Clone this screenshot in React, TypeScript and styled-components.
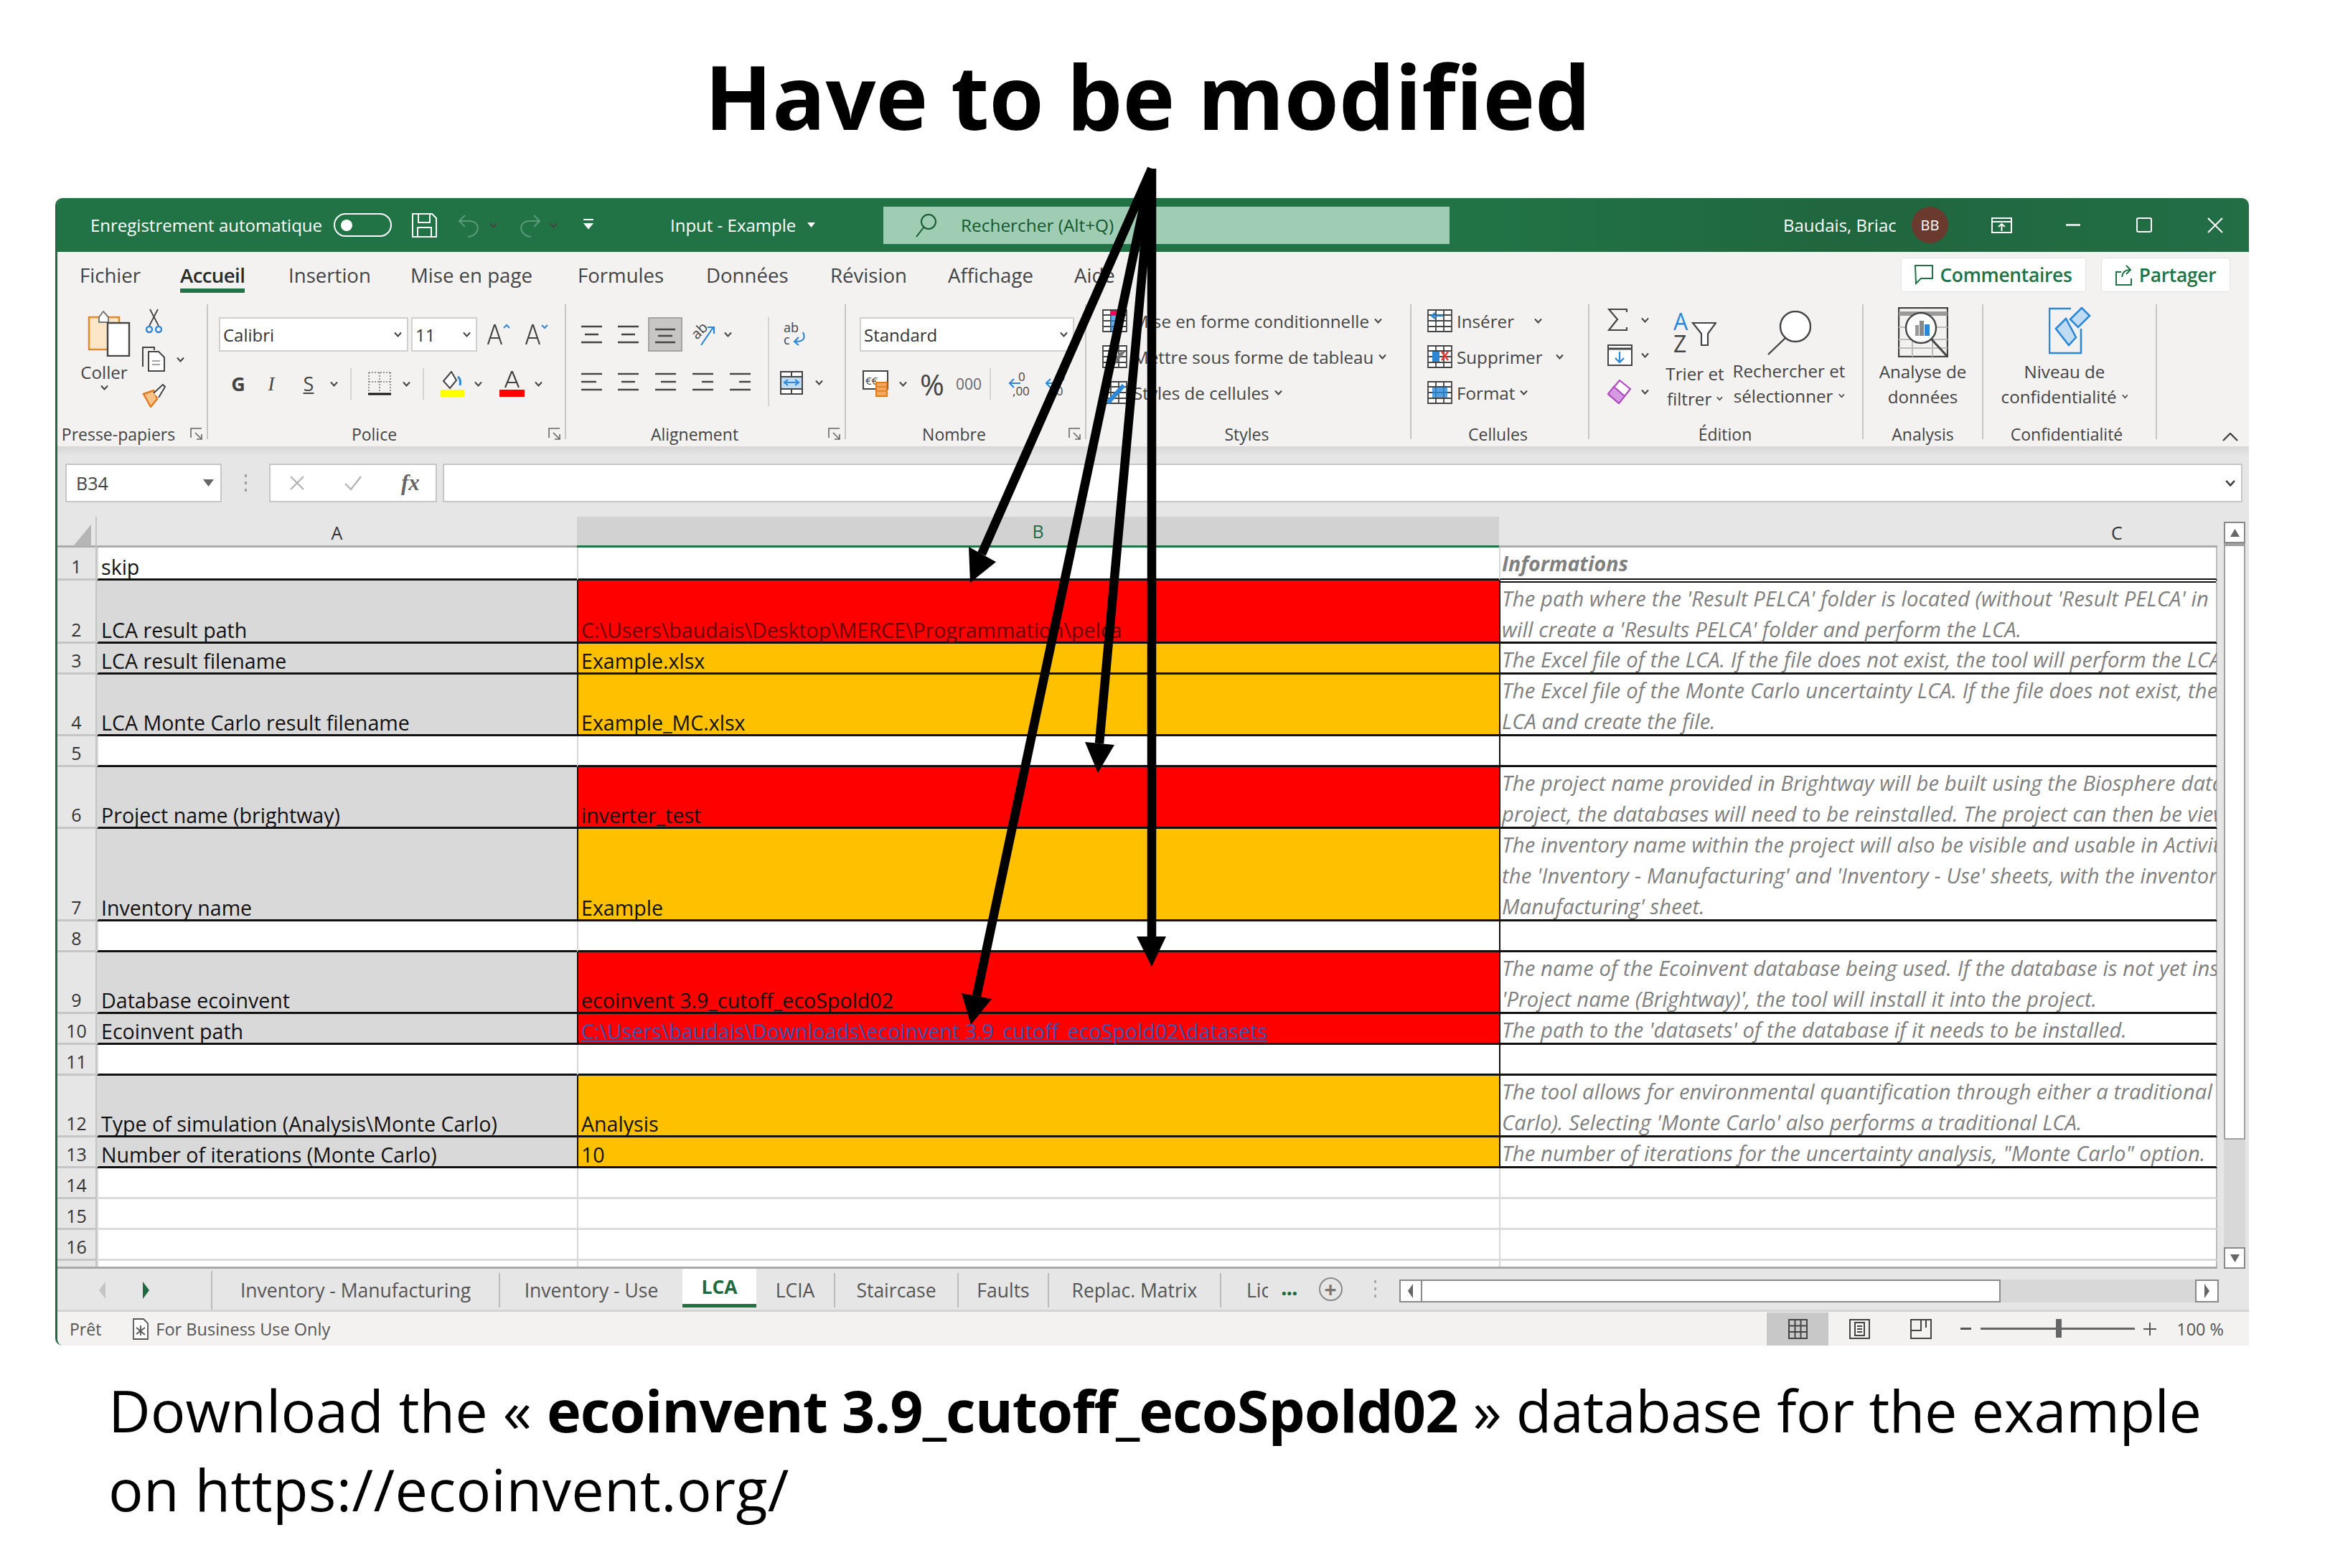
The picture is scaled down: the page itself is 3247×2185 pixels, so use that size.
import React from "react";
import styled, { createGlobalStyle } from "styled-components";

const Global = createGlobalStyle`
  html, body { margin: 0; padding: 0; background: #fff; }
  body { font-family: "Open Sans", "Liberation Sans", sans-serif; }
  * { box-sizing: border-box; }
`;

const Page = styled.div`
  position: relative;
  width: 3247px;
  height: 2185px;
  overflow: hidden;
  background: #fff;
`;

const Heading = styled.h1`
  height: 276px;
  margin: 0;
  padding: 0 48px 10px 0;
  display: flex;
  align-items: center;
  justify-content: center;
  font-size: 123px;
  font-weight: 700;
  color: #000;
`;

const Footer = styled.p`
  margin: 35px 0 0 151px;
  font-size: 81px;
  line-height: 110px;
  color: #000;
  white-space: nowrap;
  b {
    letter-spacing: -1px;
  }
`;

const Spaced = styled.span<{ $ls: number }>`
  letter-spacing: ${(p) => p.$ls}px;
`;

const Window = styled.div`
  width: 3057px;
  height: 1599px;
  margin-left: 77px;
  display: flex;
  flex-direction: column;
  background: #e6e6e6;
  border-left: 3px solid #1e6b41;
  border-radius: 10px 10px 0 10px;
  overflow: hidden;
`;

/* title bar */
const TitleBar = styled.div`
  flex: none;
  height: 75px;
  display: flex;
  align-items: center;
  padding-left: 46px;
  background: linear-gradient(90deg, #217346 0%, #217346 65%, #20663f 82%, #226e45 100%);
  color: #fff;
  font-size: 24px;
  white-space: nowrap;
`;

const Slot = styled.div<{ $w: number }>`
  flex: none;
  width: ${(p) => p.$w}px;
  display: flex;
  align-items: center;
`;

const Toggle = styled.div`
  width: 81px;
  height: 33px;
  border: 2px solid #fff;
  border-radius: 17px;
  display: flex;
  align-items: center;
  padding-left: 8px;
  &::before {
    content: "";
    width: 16px;
    height: 16px;
    border-radius: 50%;
    background: #fff;
  }
`;

const SearchBox = styled.div`
  flex: none;
  width: 789px;
  height: 52px;
  display: flex;
  align-items: center;
  gap: 34px;
  padding-left: 44px;
  background: #9fcdb3;
  color: #14592f;
  font-size: 24.4px;
`;

const Avatar = styled.div`
  width: 51px;
  height: 51px;
  border-radius: 50%;
  background: #6a3a2e;
  display: flex;
  align-items: center;
  justify-content: center;
  font-size: 20px;
`;

/* ribbon */
const Ribbon = styled.div`
  flex: none;
  height: 271px;
  display: flex;
  flex-direction: column;
  background: #f3f2f1;
  color: #444;
`;

const TabRow = styled.div`
  height: 73px;
  flex: none;
  display: flex;
  padding-left: 31px;
  font-size: 27.6px;
  white-space: nowrap;
`;

const RibbonTab = styled.div<{ $w: number; $active?: boolean }>`
  flex: none;
  width: ${(p) => p.$w}px;
  padding-top: 13px;
  span {
    display: inline-block;
    height: 44px;
    color: ${(p) => (p.$active ? "#2b2b2b" : "#444")};
    font-weight: ${(p) => (p.$active ? 600 : 400)};
    letter-spacing: ${(p) => (p.$active ? "-0.6px" : "0")};
    border-bottom: ${(p) => (p.$active ? "6px solid #217346" : "none")};
  }
`;

const TabActions = styled.div`
  margin-left: auto;
  display: flex;
  gap: 21px;
  padding: 8px 26px 0 0;
`;

const ActionButton = styled.div<{ $w: number }>`
  width: ${(p) => p.$w}px;
  height: 48px;
  display: flex;
  align-items: center;
  justify-content: center;
  gap: 9px;
  background: #fff;
  border: 1px solid #e4e3e2;
  border-radius: 3px;
  color: #217346;
  font-weight: 600;
  font-size: 26.4px;
  letter-spacing: -0.3px;
`;

const Groups = styled.div`
  flex: 1;
  display: flex;
  padding-left: 2px;
`;

const Group = styled.div<{ $w: number }>`
  position: relative;
  flex: none;
  width: ${(p) => p.$w}px;
  height: 198px;
  display: flex;
  flex-direction: column;
  &::after {
    content: "";
    position: absolute;
    top: 0;
    right: 0;
    width: 2px;
    height: 188px;
    background: #c8c6c4;
  }
`;

const GroupBody = styled.div`
  height: 164px;
  display: flex;
`;

const GroupLabel = styled.div<{ $pr?: number }>`
  height: 34px;
  line-height: 34px;
  text-align: center;
  padding-right: ${(p) => p.$pr ?? 0}px;
  font-size: 23px;
  color: #444;
  white-space: nowrap;
`;

const Launcher = styled.svg`
  position: absolute;
  right: 7px;
  bottom: 8px;
`;

const Stack = styled.div<{ $gap?: number; $top?: number; $left?: number; $w?: number; $center?: boolean }>`
  flex: none;
  display: flex;
  flex-direction: column;
  gap: ${(p) => p.$gap ?? 0}px;
  margin-top: ${(p) => p.$top ?? 0}px;
  margin-left: ${(p) => p.$left ?? 0}px;
  ${(p) => (p.$w ? `width: ${p.$w}px;` : "")}
  ${(p) => (p.$center ? "align-items: center;" : "")}
`;

const Line = styled.div<{ $gap?: number; $left?: number; $h?: number }>`
  display: flex;
  align-items: center;
  gap: ${(p) => p.$gap ?? 0}px;
  margin-left: ${(p) => p.$left ?? 0}px;
  ${(p) => (p.$h ? `height: ${p.$h}px;` : "")}
  white-space: nowrap;
`;

const Icon = styled.svg<{ $ml?: number }>`
  display: block;
  flex: none;
  margin-left: ${(p) => p.$ml ?? 0}px;
`;

const SmallText = styled.div<{ $ml?: number; $mt?: number }>`
  font-size: 24.2px;
  line-height: 35px;
  color: #444;
  white-space: nowrap;
  margin-left: ${(p) => p.$ml ?? 0}px;
  margin-top: ${(p) => p.$mt ?? 0}px;
  display: flex;
  align-items: center;
  gap: 7px;
`;

const StyleRow = styled.div<{ $gap: number }>`
  height: 34px;
  display: flex;
  align-items: center;
  gap: ${(p) => p.$gap}px;
  white-space: nowrap;
`;

const SelectBox = styled.div<{ $w: number; $ml?: number }>`
  flex: none;
  width: ${(p) => p.$w}px;
  height: 48px;
  margin-left: ${(p) => p.$ml ?? 0}px;
  background: #fff;
  border: 2px solid #d2d0ce;
  display: flex;
  align-items: center;
  justify-content: space-between;
  padding: 0 7px 0 4px;
  font-size: 24px;
  color: #333;
`;

const FontButton = styled.div<{ $w: number; $italic?: boolean; $under?: boolean; $bold?: boolean; $ml?: number }>`
  flex: none;
  width: ${(p) => p.$w}px;
  margin-left: ${(p) => p.$ml ?? 0}px;
  text-align: center;
  font-size: 27px;
  line-height: 34px;
  color: #444;
  font-family: ${(p) => (p.$italic ? '"Liberation Serif", serif' : "inherit")};
  font-style: ${(p) => (p.$italic ? "italic" : "normal")};
  font-weight: ${(p) => (p.$bold ? 700 : 400)};
  text-decoration: ${(p) => (p.$under ? "underline" : "none")};
`;

const VRule = styled.div<{ $h: number; $ml: number; $mt?: number; $mr?: number }>`
  flex: none;
  width: 2px;
  height: ${(p) => p.$h}px;
  margin-left: ${(p) => p.$ml}px;
  margin-top: ${(p) => p.$mt ?? 0}px;
  margin-right: ${(p) => p.$mr ?? 0}px;
  background: #d6d4d2;
`;

const ActiveAlign = styled.div`
  flex: none;
  width: 48px;
  height: 48px;
  margin-left: 12px;
  background: #c8c6c4;
  border: 2px solid #a5a3a1;
  display: flex;
  align-items: center;
  justify-content: center;
`;

const PercentSign = styled.div`
  flex: none;
  margin-left: 18px;
  font-size: 41px;
  color: #444;
  line-height: 44px;
`;

const Thousands = styled.div`
  flex: none;
  margin-left: 16px;
  font-size: 21px;
  color: #666;
`;

const Collapse = styled.svg`
  position: absolute;
  right: 15px;
  bottom: 7px;
`;

const RibbonWrap = styled.div`
  position: relative;
`;

/* formula bar */
const FormulaBar = styled.div`
  flex: none;
  height: 98px;
  padding: 24px 9px 0 11px;
  display: flex;
  align-items: flex-start;
  background: linear-gradient(180deg, #d8d8d8 0, #e6e6e6 14px);
`;

const NameBox = styled.div`
  flex: none;
  width: 218px;
  height: 54px;
  background: #fff;
  border: 2px solid #c6c6c6;
  display: flex;
  align-items: center;
  justify-content: space-between;
  padding: 0 9px 0 13px;
  font-size: 25px;
  color: #444;
`;

const Dots = styled.div`
  flex: none;
  width: 66px;
  height: 54px;
  display: flex;
  align-items: center;
  justify-content: center;
  &::before {
    content: "";
    width: 3px;
    height: 24px;
    background: repeating-linear-gradient(180deg, #a0a0a0 0 4px, transparent 4px 10px);
  }
`;

const FxBox = styled.div`
  flex: none;
  width: 234px;
  height: 54px;
  background: #fff;
  border: 2px solid #c6c6c6;
  display: flex;
  align-items: center;
  gap: 54px;
  padding-left: 26px;
  color: #555;
`;

const FxLabel = styled.span`
  font-family: "Liberation Serif", serif;
  font-style: italic;
  font-size: 31px;
  font-weight: 700;
  color: #666;
`;

const FormulaInput = styled.div`
  flex: 1;
  height: 54px;
  margin-left: 8px;
  background: #fff;
  border: 2px solid #c6c6c6;
  display: flex;
  align-items: center;
  justify-content: flex-end;
  padding-right: 8px;
`;

/* sheet */
const SheetArea = styled.div`
  flex: none;
  height: 1048px;
  display: flex;
  background: #fff;
`;

const Grid = styled.div`
  flex: none;
  width: 3010px;
  height: 1048px;
  overflow: hidden;
  border-bottom: 3px solid #a8a8a8;
`;

const ColHeads = styled.div`
  height: 43px;
  display: grid;
  grid-template-columns: 55px 669px 1285px 1001px;
  background: #e6e6e6;
  font-size: 25px;
  color: #333;
  border-bottom: 3px solid #ababab;
`;

const CornerCell = styled.div`
  border-right: 2px solid #c4c4c4;
  display: flex;
  align-items: flex-end;
  justify-content: flex-end;
  padding: 0 6px 2px 0;
`;

const ColHead = styled.div<{ $selected?: boolean; $pl?: number }>`
  display: flex;
  align-items: center;
  justify-content: ${(p) => (p.$pl ? "flex-start" : "center")};
  padding-left: ${(p) => p.$pl ?? 0}px;
  height: 43px;
  background: ${(p) => (p.$selected ? "#d2d2d2" : "transparent")};
  ${(p) => (p.$selected ? "color: #1e6b41; border-bottom: 3px solid #217346;" : "")}
`;

const SheetRow = styled.div<{ $h: number }>`
  height: ${(p) => p.$h}px;
  display: grid;
  grid-template-columns: 55px 669px 1285px 1001px;
  grid-template-rows: ${(p) => p.$h}px;
`;

const RowHead = styled.div`
  background: #e6e6e6;
  border-right: 2px solid #c4c4c4;
  border-bottom: 3px solid #c6c6c6;
  display: flex;
  align-items: flex-end;
  justify-content: center;
  font-size: 25px;
  line-height: 33px;
  color: #333;
`;

const Cell = styled.div<{ $fill?: string; $dark?: boolean; $leftDark?: boolean; $color?: string }>`
  background: ${(p) => p.$fill ?? "#fff"};
  border-bottom: 3px solid ${(p) => (p.$dark ? "#111" : "#dcdcdc")};
  border-left: 2px solid ${(p) => (p.$leftDark ? "#111" : "#d8d8d8")};
  padding: 0 0 0 4px;
  display: flex;
  flex-direction: column;
  justify-content: flex-end;
  font-size: 28.6px;
  line-height: 33px;
  color: ${(p) => p.$color ?? "#111"};
  white-space: nowrap;
`;

const NoteCell = styled(Cell)<{ $pt: number }>`
  position: relative;
  justify-content: flex-start;
  padding: ${(p) => p.$pt}px 0 0 2px;
  border-right: 2px solid #bcbcbc;
`;

const NoteLine = styled.div`
  width: 996px;
  height: 43px;
  flex: none;
  overflow: hidden;
  line-height: 43px;
  font-size: 29.2px;
  font-style: italic;
  color: #7f7f7f;
  letter-spacing: 0.13px;
`;

const NoteTitle = styled(NoteLine)`
  font-weight: 700;
  font-size: 28.5px;
  letter-spacing: 0;
`;

const DoubleRule = styled.div`
  position: absolute;
  left: 0;
  right: 0;
  bottom: -6px;
  height: 6px;
  border-top: 2px solid #111;
  border-bottom: 2px solid #111;
  background: #fff;
  z-index: 1;
`;

const LinkText = styled.span`
  color: #3357b5;
  text-decoration: underline;
`;

const VScroll = styled.div`
  flex: none;
  width: 44px;
  height: 1048px;
  background: #e6e6e6;
  padding: 7px 5px 0 9px;
  display: flex;
  flex-direction: column;
`;

const ScrollButton = styled.div`
  flex: none;
  height: 30px;
  background: #fff;
  border: 2px solid #8a8a8a;
  display: flex;
  align-items: center;
  justify-content: center;
`;

const ScrollThumb = styled.div`
  flex: none;
  height: 831px;
  background: #fff;
  border: 2px solid #a0a0a0;
  border-top-width: 4px;
`;

const ScrollTrack = styled.div`
  flex: 1;
  background: #d8d8d8;
`;

/* sheet tabs */
const TabBar = styled.div`
  flex: none;
  height: 60px;
  display: flex;
  align-items: flex-start;
  background: #e6e6e6;
  font-size: 26.5px;
  color: #555;
  white-space: nowrap;
  border-bottom: 3px solid #d4d4d4;
`;

const NavArrows = styled.div`
  flex: none;
  width: 216px;
  height: 54px;
  display: flex;
  align-items: center;
  padding-left: 58px;
  gap: 52px;
  border-right: 2px solid #bcbcbc;
  margin-top: 3px;
`;

const SheetTab = styled.div<{ $w: number; $active?: boolean; $last?: boolean }>`
  flex: none;
  width: ${(p) => p.$w}px;
  height: ${(p) => (p.$active ? 54 : 48)}px;
  margin-top: ${(p) => (p.$active ? 0 : 6)}px;
  display: flex;
  align-items: center;
  justify-content: center;
  overflow: hidden;
  ${(p) => (p.$active
    ? "background: #fff; color: #1e6b41; font-weight: 700; border-bottom: 5px solid #217346;"
    : p.$last ? "" : "border-right: 2px solid #bcbcbc;")}
`;

const ClippedTab = styled.div`
  flex: none;
  width: 65px;
  height: 48px;
  margin-top: 6px;
  padding-left: 35px;
  display: flex;
  align-items: center;
  overflow: hidden;
`;

const MoreDots = styled.div`
  flex: none;
  margin: 5px 0 0 18px;
  color: #1e6b41;
  font-weight: 700;
  font-size: 30px;
  letter-spacing: -1px;
`;

const AddSheet = styled.div`
  flex: none;
  width: 33px;
  height: 33px;
  margin: 12px 0 0 30px;
  border: 2px solid #8a8a8a;
  border-radius: 50%;
  display: flex;
  align-items: center;
  justify-content: center;
  font-size: 30px;
  line-height: 1;
  font-weight: 700;
  color: #777;
`;

const TabDots = styled.div`
  flex: none;
  width: 3px;
  height: 24px;
  margin: 16px 0 0 44px;
  background: repeating-linear-gradient(180deg, #a8a8a8 0 4px, transparent 4px 10px);
`;

const HScroll = styled.div`
  flex: none;
  width: 1142px;
  height: 32px;
  margin: 15px 0 0 32px;
  display: flex;
  background: #d8d8d8;
`;

const HButton = styled.div<{ $w: number }>`
  flex: none;
  width: ${(p) => p.$w}px;
  height: 32px;
  background: #fff;
  border: 2px solid #8a8a8a;
  display: flex;
  align-items: center;
  justify-content: center;
`;

const HThumb = styled.div`
  flex: none;
  width: 806px;
  height: 32px;
  background: #fff;
  border: 2px solid #8a8a8a;
  border-left: none;
`;

const HTrack = styled.div`
  flex: 1;
`;

/* status bar */
const StatusBar = styled.div`
  flex: 1;
  display: flex;
  align-items: center;
  padding-left: 17px;
  background: #f3f2f1;
  color: #555;
  font-size: 23px;
  white-space: nowrap;
`;

const StatusText = styled.div<{ $ml: number }>`
  flex: none;
  margin-left: ${(p) => p.$ml}px;
  font-size: 23.5px;
  color: #555;
`;

const ViewButton = styled.div<{ $active?: boolean; $ml?: number }>`
  flex: none;
  width: 86px;
  height: 46px;
  margin-left: ${(p) => p.$ml ?? 0}px;
  display: flex;
  align-items: center;
  justify-content: center;
  background: ${(p) => (p.$active ? "#c8c8c8" : "transparent")};
`;

const ZoomSlider = styled.div`
  position: relative;
  flex: none;
  width: 215px;
  height: 3px;
  margin-left: 13px;
  background: #666;
`;

const ZoomThumb = styled.div`
  position: absolute;
  left: 105px;
  top: -12px;
  width: 8px;
  height: 26px;
  background: #666;
`;

const Arrows = styled.svg`
  position: absolute;
  left: 0;
  top: 0;
  pointer-events: none;
`;

const dark = "#444";
const blue = "#2b88d8";

const Chev = ({ ml = 0, size = 1 }: { ml?: number; size?: number }) => (
  <Icon $ml={ml} width={11 * size} height={8 * size} viewBox="0 0 11 8">
    <path d="M1 1.500 5.500 6.500 10 1.500" fill="none" stroke={dark} strokeWidth="2" />
  </Icon>
);

const Launch = () => (
  <Launcher width="18" height="18" viewBox="0 0 18 18">
    <path d="M1 14V1h15M7 7l9 9M9 16h7V9" fill="none" stroke="#666" strokeWidth="1.600" />
  </Launcher>
);

const Lines = ({ ys, xs, ml = 0, w = 31, h = 30 }: { ys: number[]; xs: [number, number][]; ml?: number; w?: number; h?: number }) => (
  <Icon $ml={ml} width={w} height={h} viewBox={`0 0 ${w} ${h}`}>
    {ys.map((y, i) => (
      <line key={y} x1={xs[i][0]} x2={xs[i][1]} y1={y} y2={y} stroke={dark} strokeWidth="2.400" />
    ))}
  </Icon>
);

const Paste = () => (
  <Icon $ml={14} width="60" height="64" viewBox="0 0 60 64">
    <path d="M2 9h42v45H2z" fill="#fbe6c7" stroke="#e08a2c" strokeWidth="2.500" />
    <path d="M16 9 22 1l7 8v7H16z" fill="#fff" stroke="#777" strokeWidth="2" />
    <rect x="28" y="17" width="30" height="46" fill="#fff" stroke={dark} strokeWidth="2.400" />
  </Icon>
);

const Scissors = () => (
  <Icon width="23" height="36" viewBox="0 0 23 36">
    <path d="M5 24 17 1M18 24 6 1" stroke={dark} strokeWidth="1.800" fill="none" />
    <circle cx="5" cy="29" r="4" fill="none" stroke={blue} strokeWidth="2.400" />
    <circle cx="18" cy="29" r="4" fill="none" stroke={blue} strokeWidth="2.400" />
  </Icon>
);

const Copy = () => (
  <Icon width="33" height="35" viewBox="0 0 33 35">
    <path d="M1 28V1h16v4" fill="none" stroke={dark} strokeWidth="2" />
    <path d="M9 7h14l8 8v19H9z" fill="#fff" stroke={dark} strokeWidth="2" />
    <path d="M14 20h11M14 25h11" stroke="#888" strokeWidth="1.600" />
  </Icon>
);

const Brush = () => (
  <Icon width="33" height="33" viewBox="0 0 33 33">
    <path d="M2 14 16 9l5 12-9 11z" fill="#f6c48a" stroke="#e07a1f" strokeWidth="2.400" />
    <path d="M16 13 29 1l3 3-9 15" fill="#fff" stroke={dark} strokeWidth="2" />
  </Icon>
);

const BigA = ({ up }: { up: boolean }) => (
  <Icon $ml={up ? 14 : 21} width="32" height="30" viewBox="0 0 32 30">
    <path d="M1 29 10 2h1l9 27M5 20h12" fill="none" stroke={dark} strokeWidth="2.200" />
    <path d={up ? "M23 6l4-4 4 4" : "M23 2l4 4 4-4"} fill="none" stroke={blue} strokeWidth="2" />
  </Icon>
);

const Borders = () => (
  <Icon $ml={22} width="34" height="34" viewBox="0 0 34 34">
    <path d="M2 1h30M2 1v26M32 1v26M17 1v26M2 14h30" stroke="#777" strokeWidth="1.500" strokeDasharray="2 2" fill="none" />
    <path d="M1 31h32" stroke="#111" strokeWidth="3" />
  </Icon>
);

const FillColor = () => (
  <Icon $ml={23} width="33" height="36" viewBox="0 0 33 36">
    <path d="M15 1 4 14l9 10 9-11z" fill="#fff" stroke={dark} strokeWidth="2" />
    <path d="M24 8c4 3 4 8 3 12" stroke={blue} strokeWidth="3" fill="none" />
    <rect y="26" width="33" height="10" fill="#ffff00" />
  </Icon>
);

const FontColor = () => (
  <Icon $ml={24} width="35" height="36" viewBox="0 0 35 36">
    <path d="M8 23 17 1h1l9 22M11 16h13" fill="none" stroke={dark} strokeWidth="2.200" />
    <rect y="26" width="35" height="10" fill="#f00" />
  </Icon>
);

const Orientation = () => (
  <Icon $ml={13} width="36" height="32" viewBox="0 0 36 32">
    <text x="1" y="19" transform="rotate(-45 10 14)" fontSize="20" fill={dark} fontFamily="Open Sans">ab</text>
    <path d="M13 31 30 6M22 6h9v9" fill="none" stroke={blue} strokeWidth="2.200" />
  </Icon>
);

const Wrap = () => (
  <Icon width="32" height="34" viewBox="0 0 32 34">
    <text x="1" y="14" fontSize="18" fill={dark} fontFamily="Open Sans">ab</text>
    <text x="1" y="31" fontSize="18" fill={dark} fontFamily="Open Sans">c</text>
    <path d="M28 14c4 9 0 13-10 13M22 21l-6 6 6 5" fill="none" stroke={blue} strokeWidth="2.200" />
  </Icon>
);

const Merge = () => (
  <Icon $ml={40} width="32" height="33" viewBox="0 0 32 33">
    <path d="M1 1h30v31H1zM1 8h30M1 25h30M16 1v7M16 25v7" fill="#fff" stroke={dark} strokeWidth="2" />
    <rect x="2" y="9" width="28" height="15" fill="#bfdcf3" />
    <path d="M6 16h20M11 12l-5 4 5 4M21 12l5 4-5 4" fill="none" stroke={blue} strokeWidth="2" />
  </Icon>
);

const Accounting = () => (
  <Icon width="36" height="38" viewBox="0 0 36 38">
    <rect x="1" y="1" width="34" height="25" fill="#fff" stroke={dark} strokeWidth="2" />
    <text x="4" y="20" fontSize="15" fill={dark} fontFamily="Open Sans">€€</text>
    <path d="M19 17h15v19H19z" fill="#f3a85b" stroke="#e07a1f" strokeWidth="2" />
    <path d="M19 23h15M19 29h15" stroke="#e07a1f" strokeWidth="1.600" />
  </Icon>
);

const DecArrow = ({ ml, text }: { ml: number; text: string[] }) => (
  <Icon $ml={ml} width="33" height="40" viewBox="0 0 33 40">
    <text x="14" y="16" fontSize="17" fill={dark} fontFamily="Open Sans">{text[0]}</text>
    <text x="6" y="36" fontSize="17" fill={dark} fontFamily="Open Sans">{text[1]}</text>
    <path d="M17 19H2M8 13l-6 6 6 6" fill="none" stroke={blue} strokeWidth="2.200" />
  </Icon>
);

const TableIcon = ({ children }: { children?: React.ReactNode }) => (
  <Icon width="35" height="32" viewBox="0 0 35 32">
    <path d="M1 1h33v30H1zM1 8h33M1 16h33M1 24h33M12 1v30M23 1v30" fill="#fff" stroke={dark} strokeWidth="1.800" />
    {children}
  </Icon>
);

const Sum = () => (
  <Icon width="28" height="31" viewBox="0 0 28 31">
    <path d="M27 5V1H2l12 14L2 30h25v-4" fill="none" stroke={dark} strokeWidth="2.200" />
  </Icon>
);

const FillDown = () => (
  <Icon width="35" height="30" viewBox="0 0 35 30">
    <rect x="1" y="1" width="33" height="28" fill="#fff" stroke={dark} strokeWidth="2" />
    <path d="M1 6h33" stroke={dark} strokeWidth="3" />
    <path d="M17 10v15M11 19l6 6 6-6" fill="none" stroke={blue} strokeWidth="2.200" />
  </Icon>
);

const Eraser = () => (
  <Icon width="33" height="34" viewBox="0 0 33 34">
    <path d="M17 1 32 13 16 33 1 20z" fill="#fff" stroke="#b146c2" strokeWidth="2.200" />
    <path d="M1 20 9 10l15 13-8 10z" fill="#d59ae0" stroke="#b146c2" strokeWidth="2" />
  </Icon>
);

const SortFilter = () => (
  <Icon width="60" height="58" viewBox="0 0 60 58">
    <text x="0" y="25" fontSize="32" fill={blue} fontFamily="Open Sans">A</text>
    <text x="0" y="56" fontSize="32" fill={dark} fontFamily="Open Sans">Z</text>
    <path d="M27 15h32L48 30v16h-9V30z" fill="#fff" stroke={dark} strokeWidth="2.200" />
  </Icon>
);

const BigSearch = () => (
  <Icon width="62" height="62" viewBox="0 0 62 62">
    <circle cx="40" cy="22" r="21" fill="#fff" stroke={dark} strokeWidth="2.400" />
    <path d="M26 38 2 61" stroke={dark} strokeWidth="2.400" />
  </Icon>
);

const Analysis = () => (
  <Icon width="70" height="70" viewBox="0 0 70 70">
    <rect x="1" y="1" width="68" height="68" fill="#f3f2f1" stroke={dark} strokeWidth="2.400" />
    <path d="M1 9h68" stroke="#999" strokeWidth="6" />
    <path d="M1 28h68M1 45h68M1 57h68M20 45v24M48 45v24" stroke="#bbb" strokeWidth="2" />
    <circle cx="32" cy="29" r="21" fill="#fff" stroke={dark} strokeWidth="2.400" />
    <path d="M46 44 68 68" stroke={dark} strokeWidth="3" />
    <rect x="24" y="25" width="5" height="15" fill="#999" />
    <rect x="30" y="19" width="6" height="21" fill="#888" />
    <rect x="37" y="24" width="7" height="16" fill={blue} />
  </Icon>
);

const Sensitivity = () => (
  <Icon $ml={14} width="59" height="66" viewBox="0 0 59 66">
    <path d="M31 2H1v62h44V30" fill="none" stroke={blue} strokeWidth="2.600" />
    <path d="M30 17 46 1l11 11-16 16z" fill="#bfdcf3" stroke={blue} strokeWidth="2.600" />
    <path d="M10 30l14-14 14 26-10 11z" fill="#bfdcf3" stroke={blue} strokeWidth="2.600" />
  </Icon>
);

const rows = [
  { n: 1, h: 46, a: "skip", plain: true, c: [] as string[] },
  { n: 2, h: 88, a: "LCA result path", fill: "#ff0000", b: "C:\\Users\\baudais\\Desktop\\MERCE\\Programmation\\pelca", bColor: "#6a0000", c: ["The path where the 'Result PELCA' folder is located (without 'Result PELCA' in", "will create a 'Results PELCA' folder and perform the LCA."] },
  { n: 3, h: 43, a: "LCA result filename", fill: "#ffc000", b: "Example.xlsx", c: ["The Excel file of the LCA. If the file does not exist, the tool will perform the LCA"] },
  { n: 4, h: 86, a: "LCA Monte Carlo result filename", fill: "#ffc000", b: "Example_MC.xlsx", c: ["The Excel file of the Monte Carlo uncertainty LCA. If the file does not exist, the", "LCA and create the file."] },
  { n: 5, h: 43, a: "", white: true, c: [] },
  { n: 6, h: 86, a: "Project name (brightway)", fill: "#ff0000", b: "inverter_test", c: ["The project name provided in Brightway will be built using the Biosphere data", "project, the databases will need to be reinstalled. The project can then be view"] },
  { n: 7, h: 129, a: "Inventory name", fill: "#ffc000", b: "Example", c: ["The inventory name within the project will also be visible and usable in Activit", "the 'Inventory - Manufacturing' and 'Inventory - Use' sheets, with the inventor", "Manufacturing' sheet."] },
  { n: 8, h: 43, a: "", white: true, c: [] },
  { n: 9, h: 86, a: "Database ecoinvent", fill: "#ff0000", b: "ecoinvent 3.9_cutoff_ecoSpold02", c: ["The name of the Ecoinvent database being used. If the database is not yet ins", "'Project name (Brightway)', the tool will install it into the project."] },
  { n: 10, h: 43, a: "Ecoinvent path", fill: "#ff0000", link: "C:\\Users\\baudais\\Downloads\\ecoinvent 3.9_cutoff_ecoSpold02\\datasets", c: ["The path to the 'datasets' of the database if it needs to be installed."] },
  { n: 11, h: 43, a: "", white: true, c: [] },
  { n: 12, h: 86, a: "Type of simulation (Analysis\\Monte Carlo)", fill: "#ffc000", b: "Analysis", c: ["The tool allows for environmental quantification through either a traditional", "Carlo). Selecting 'Monte Carlo' also performs a traditional LCA."] },
  { n: 13, h: 43, a: "Number of iterations (Monte Carlo)", fill: "#ffc000", b: "10", c: ["The number of iterations for the uncertainty analysis, \"Monte Carlo\" option."] },
  { n: 14, h: 43, blank: true, a: "", c: [] },
  { n: 15, h: 43, blank: true, a: "", c: [] },
  { n: 16, h: 43, blank: true, a: "", c: [] },
  { n: 17, h: 20, blank: true, a: "", c: [], hideNum: true },
] as Array<{
  n: number; h: number; a: string; fill?: string; b?: string; bColor?: string; link?: string;
  c: string[]; plain?: boolean; white?: boolean; blank?: boolean; hideNum?: boolean;
}>;

const ribbonTabs: [string, number][] = [
  ["Fichier", 140], ["Accueil", 151], ["Insertion", 170], ["Mise en page", 233], ["Formules", 179],
  ["Données", 173], ["Révision", 164], ["Affichage", 176], ["Aide", 80],
];

const shaft = { stroke: "#000", strokeWidth: 12.5, fill: "none" };

export default function App() {
  return (
    <Page>
      <Global />
      <Heading>Have to be modified</Heading>
      <Window>
        <TitleBar>
          <Slot $w={339}>Enregistrement automatique</Slot>
          <Slot $w={109}><Toggle /></Slot>
          <Slot $w={64}>
            <Icon width="35" height="34" viewBox="0 0 35 34">
              <path d="M1 1h27l6 6v26H1z" fill="none" stroke="#fff" strokeWidth="2" />
              <path d="M9 1v12h16V1M8 33V20h19v13" fill="none" stroke="#fff" strokeWidth="2" />
            </Icon>
          </Slot>
          <Slot $w={84}>
            <Icon width="32" height="34" viewBox="0 0 32 34">
              <path d="M10 3 2 11l8 8M2 11h14c16 0 16 20-2 22" fill="none" stroke="#5c9b7a" strokeWidth="2" />
            </Icon>
            <Chev ml={12} />
          </Slot>
          <Slot $w={90}>
            <Icon width="32" height="34" viewBox="0 0 32 34">
              <path d="M22 3l8 8-8 8M30 11H16C0 11 0 31 18 33" fill="none" stroke="#5c9b7a" strokeWidth="2" />
            </Icon>
            <Chev ml={12} />
          </Slot>
          <Slot $w={122}>
            <Icon width="16" height="20" viewBox="0 0 16 20">
              <path d="M1 2h14M3 8h10l-5 6z" stroke="#fff" strokeWidth="2" fill="#fff" />
            </Icon>
          </Slot>
          <Slot $w={297}>Input - Example<Icon $ml={16} width="11" height="7" viewBox="0 0 11 7"><path d="M0 0h11L5.500 7z" fill="#fff" /></Icon></Slot>
          <SearchBox>
            <Icon width="30" height="34" viewBox="0 0 30 34">
              <circle cx="19" cy="12" r="10" fill="none" stroke="#14592f" strokeWidth="2" />
              <path d="M12 20 2 33" stroke="#14592f" strokeWidth="2" />
            </Icon>
            Rechercher (Alt+Q)
          </SearchBox>
          <Slot $w={465} />
          <Slot $w={179}>Baudais, Briac</Slot>
          <Slot $w={111}><Avatar>BB</Avatar></Slot>
          <Slot $w={104}>
            <Icon width="29" height="22" viewBox="0 0 29 22">
              <path d="M1 1h27v20H1zM1 6h27M14.500 19V9M10 13l4.500-4 4.500 4" fill="none" stroke="#fff" strokeWidth="2" />
            </Icon>
          </Slot>
          <Slot $w={98}>
            <Icon width="20" height="3" viewBox="0 0 20 3"><path d="M0 1.500h20" stroke="#fff" strokeWidth="2.500" /></Icon>
          </Slot>
          <Slot $w={99}>
            <Icon width="22" height="21" viewBox="0 0 22 21"><rect x="1" y="1" width="20" height="19" rx="2" fill="none" stroke="#fff" strokeWidth="2" /></Icon>
          </Slot>
          <Slot $w={22}>
            <Icon width="22" height="22" viewBox="0 0 22 22"><path d="M1 1l20 20M21 1 1 21" stroke="#fff" strokeWidth="2" /></Icon>
          </Slot>
        </TitleBar>

        <RibbonWrap>
          <Ribbon>
            <TabRow>
              {ribbonTabs.map(([t, w]) => (
                <RibbonTab key={t} $w={w} $active={t === "Accueil"}><span>{t}</span></RibbonTab>
              ))}
              <TabActions>
                <ActionButton $w={258}>
                  <Icon width="26" height="28" viewBox="0 0 26 28"><path d="M1 1h24v18H9l-7 7z" fill="none" stroke="#217346" strokeWidth="2" /></Icon>
                  Commentaires
                </ActionButton>
                <ActionButton $w={180}>
                  <Icon width="24" height="30" viewBox="0 0 24 30"><path d="M8 11H1v18h21v-9M9 18c1-7 5-10 11-10M15 2l6 6-6 6" fill="none" stroke="#217346" strokeWidth="2" /></Icon>
                  Partager
                </ActionButton>
              </TabActions>
            </TabRow>
            <Groups>
              <Group $w={208}>
                <GroupBody>
                  <Stack $left={26} $top={9} $center>
                    <Paste />
                    <SmallText $mt={4}>Coller</SmallText>
                    <Chev />
                  </Stack>
                  <Stack $left={21} $top={6}>
                    <Scissors />
                    <Line $gap={15} $left={-5}>
                      <Stack $top={17}><Copy /></Stack>
                      <Stack $top={17}><Chev /></Stack>
                    </Line>
                    <Stack $left={-5} $top={17}><Brush /></Stack>
                  </Stack>
                </GroupBody>
                <GroupLabel $pr={42}>Presse-papiers</GroupLabel>
                <Launch />
              </Group>

              <Group $w={499}>
                <GroupBody>
                  <Stack $top={18} $left={15} $gap={23}>
                    <Line>
                      <SelectBox $w={264}>Calibri<Chev /></SelectBox>
                      <SelectBox $w={92} $ml={4}>11<Chev /></SelectBox>
                      <BigA up />
                      <BigA up={false} />
                    </Line>
                    <Line $h={44} $left={12}>
                      <FontButton $w={30} $bold>G</FontButton>
                      <FontButton $w={22} $italic $ml={20}>I</FontButton>
                      <FontButton $w={22} $under $ml={30}>S</FontButton>
                      <Chev ml={19} />
                      <VRule $h={44} $ml={17} />
                      <Borders />
                      <Chev ml={15} />
                      <VRule $h={44} $ml={17} />
                      <FillColor />
                      <Chev ml={14} />
                      <FontColor />
                      <Chev ml={14} />
                    </Line>
                  </Stack>
                </GroupBody>
                <GroupLabel $pr={36}>Police</GroupLabel>
                <Launch />
              </Group>

              <Group $w={390}>
                <GroupBody>
                  <Stack $top={18} $left={20} $gap={25}>
                    <Line $h={48}>
                      <Lines ys={[4, 15, 26]} xs={[[1, 30], [6, 25], [1, 30]]} />
                      <Lines ml={20} ys={[4, 15, 26]} xs={[[1, 30], [6, 25], [1, 30]]} />
                      <ActiveAlign><Lines w={28} ys={[8, 17, 26]} xs={[[0, 28], [4, 24], [0, 28]]} /></ActiveAlign>
                      <Orientation />
                      <Chev ml={9} />
                      <VRule $h={124} $ml={50} $mt={76} $mr={19} />
                      <Wrap />
                    </Line>
                    <Line $h={36}>
                      <Lines ys={[3, 14, 25]} xs={[[1, 30], [1, 22], [1, 30]]} />
                      <Lines ml={20} ys={[3, 14, 25]} xs={[[1, 30], [6, 25], [1, 30]]} />
                      <Lines ml={21} ys={[3, 14, 25]} xs={[[1, 30], [9, 30], [1, 30]]} />
                      <Lines ml={21} ys={[3, 14, 25]} xs={[[1, 30], [14, 30], [1, 30]]} />
                      <Lines ml={21} ys={[3, 14, 25]} xs={[[1, 30], [14, 30], [1, 30]]} />
                      <Merge />
                      <Chev ml={17} />
                    </Line>
                  </Stack>
                </GroupBody>
                <GroupLabel $pr={32}>Alignement</GroupLabel>
                <Launch />
              </Group>

              <Group $w={335}>
                <GroupBody>
                  <Stack $top={18} $left={19} $gap={23}>
                    <SelectBox $w={299}>Standard<Chev /></SelectBox>
                    <Line $h={44} $left={4}>
                      <Accounting />
                      <Chev ml={15} />
                      <PercentSign>%</PercentSign>
                      <Thousands>000</Thousands>
                      <VRule $h={44} $ml={11} />
                      <DecArrow ml={24} text={["0", ",00"]} />
                      <DecArrow ml={18} text={[",0", "00"]} />
                    </Line>
                  </Stack>
                </GroupBody>
                <GroupLabel $pr={34}>Nombre</GroupLabel>
                <Launch />
              </Group>

              <Group $w={453}>
                <GroupBody>
                  <Stack $top={6} $left={22} $gap={16}>
                    <StyleRow $gap={8}>
                      <TableIcon><rect x="12" y="2" width="11" height="28" fill={blue} opacity="0.7" /><rect x="12" y="2" width="11" height="6" fill="#f05" /></TableIcon>
                      <SmallText>Mise en forme conditionnelle<Chev /></SmallText>
                    </StyleRow>
                    <StyleRow $gap={8}>
                      <TableIcon><path d="M14 28 30 8" stroke="#777" strokeWidth="5" /></TableIcon>
                      <SmallText>Mettre sous forme de tableau<Chev /></SmallText>
                    </StyleRow>
                    <StyleRow $gap={8}>
                      <TableIcon><path d="M8 30 30 6" stroke={blue} strokeWidth="6" /></TableIcon>
                      <SmallText>Styles de cellules<Chev /></SmallText>
                    </StyleRow>
                  </Stack>
                </GroupBody>
                <GroupLabel $pr={6}>Styles</GroupLabel>
              </Group>

              <Group $w={248}>
                <GroupBody>
                  <Stack $top={6} $left={22} $gap={16}>
                    <StyleRow $gap={6}>
                      <TableIcon><path d="M22 9H6M11 5l-5 4 5 4" stroke={blue} strokeWidth="2.400" fill="none" /></TableIcon>
                      <SmallText>Insérer</SmallText>
                      <Chev ml={22} />
                    </StyleRow>
                    <StyleRow $gap={6}>
                      <TableIcon><rect x="7" y="9" width="10" height="14" fill={blue} /><path d="M20 9l9 12M29 9l-9 12" stroke="#e33" strokeWidth="2.400" /></TableIcon>
                      <SmallText>Supprimer</SmallText>
                      <Chev ml={12} />
                    </StyleRow>
                    <StyleRow $gap={6}>
                      <TableIcon><rect x="7" y="9" width="21" height="14" fill={blue} opacity="0.8" /></TableIcon>
                      <SmallText>Format<Chev /></SmallText>
                    </StyleRow>
                  </Stack>
                </GroupBody>
                <GroupLabel $pr={7}>Cellules</GroupLabel>
              </Group>

              <Group $w={382}>
                <GroupBody>
                  <Stack $top={6} $left={25} $gap={19}>
                    <Line><Sum /><Chev ml={19} /></Line>
                    <Line><FillDown /><Chev ml={12} /></Line>
                    <Line><Eraser /><Chev ml={14} /></Line>
                  </Stack>
                  <Stack $top={11} $left={24} $w={80} $center>
                    <SortFilter />
                    <SmallText $mt={10}>Trier et</SmallText>
                    <SmallText>filtrer<Chev size={0.8} /></SmallText>
                  </Stack>
                  <Stack $top={9} $left={12} $w={158} $center>
                    <BigSearch />
                    <SmallText $mt={4}>Rechercher et</SmallText>
                    <SmallText>sélectionner<Chev size={0.8} /></SmallText>
                  </Stack>
                </GroupBody>
                <GroupLabel $pr={4}>Édition</GroupLabel>
              </Group>

              <Group $w={167}>
                <GroupBody>
                  <Stack $top={4} $w={165} $center>
                    <Analysis />
                    <SmallText $mt={2}>Analyse de</SmallText>
                    <SmallText>données</SmallText>
                  </Stack>
                </GroupBody>
                <GroupLabel $pr={2}>Analysis</GroupLabel>
              </Group>

              <Group $w={242}>
                <GroupBody>
                  <Stack $top={4} $w={226} $center>
                    <Sensitivity />
                    <SmallText $mt={6}>Niveau de</SmallText>
                    <SmallText>confidentialité<Chev size={0.8} /></SmallText>
                  </Stack>
                </GroupBody>
                <GroupLabel $pr={10}>Confidentialité</GroupLabel>
              </Group>
            </Groups>
          </Ribbon>
          <Collapse width="22" height="12" viewBox="0 0 22 12">
            <path d="M1 11 11 1l10 10" fill="none" stroke={dark} strokeWidth="2.400" />
          </Collapse>
        </RibbonWrap>

        <FormulaBar>
          <NameBox>
            B34
            <Icon width="15" height="10" viewBox="0 0 15 10"><path d="M0 0h15L7.500 10z" fill="#666" /></Icon>
          </NameBox>
          <Dots />
          <FxBox>
            <Icon width="22" height="22" viewBox="0 0 22 22"><path d="M2 2l18 18M20 2 2 20" stroke="#b5b5b5" strokeWidth="2.400" /></Icon>
            <Icon width="26" height="22" viewBox="0 0 26 22"><path d="M2 12l8 8L24 2" fill="none" stroke="#b5b5b5" strokeWidth="2.400" /></Icon>
            <FxLabel>fx</FxLabel>
          </FxBox>
          <FormulaInput><Chev size={1.300} /></FormulaInput>
        </FormulaBar>

        <SheetArea>
          <Grid>
            <ColHeads>
              <CornerCell>
                <Icon width="25" height="30" viewBox="0 0 25 30"><path d="M25 0v30H0z" fill="#b5b5b5" /></Icon>
              </CornerCell>
              <ColHead>A</ColHead>
              <ColHead $selected>B</ColHead>
              <ColHead $pl={853}>C</ColHead>
            </ColHeads>
            {rows.map((r) => {
              const ruled = !r.blank;
              const dataFill = r.fill;
              return (
                <SheetRow key={r.n} $h={r.h}>
                  <RowHead>{r.hideNum ? "" : r.n}</RowHead>
                  <Cell $dark={ruled} $fill={dataFill ? "#d9d9d9" : "#fff"} $leftDark={false}>{r.a}</Cell>
                  <Cell $dark={ruled} $fill={dataFill ?? "#fff"} $leftDark={!!dataFill} $color={r.bColor}>
                    {r.link ? <LinkText>{r.link}</LinkText> : r.b}
                  </Cell>
                  <NoteCell $dark={ruled} $leftDark={!r.blank && !r.plain} $pt={r.n === 2 ? 4 : 1}>
                    {r.plain && <NoteTitle>Informations</NoteTitle>}
                    {r.plain && <DoubleRule />}
                    {r.c.map((l) => <NoteLine key={l}>{l}</NoteLine>)}
                  </NoteCell>
                </SheetRow>
              );
            })}
          </Grid>
          <VScroll>
            <ScrollButton>
              <Icon width="13" height="11" viewBox="0 0 13 11"><path d="M6.500 0 13 11H0z" fill="#666" /></Icon>
            </ScrollButton>
            <ScrollThumb />
            <ScrollTrack />
            <ScrollButton>
              <Icon width="13" height="11" viewBox="0 0 13 11"><path d="M6.500 11 13 0H0z" fill="#666" /></Icon>
            </ScrollButton>
          </VScroll>
        </SheetArea>

        <TabBar>
          <NavArrows>
            <Icon width="9" height="24" viewBox="0 0 9 24"><path d="M9 0v24L0 12z" fill="#c4c4c4" /></Icon>
            <Icon width="9" height="24" viewBox="0 0 9 24"><path d="M0 0v24l9-12z" fill="#1e6b41" /></Icon>
          </NavArrows>
          <SheetTab $w={401}>Inventory - Manufacturing</SheetTab>
          <SheetTab $w={254} $last>Inventory - Use</SheetTab>
          <SheetTab $w={103} $active>LCA</SheetTab>
          <SheetTab $w={110}>LCIA</SheetTab>
          <SheetTab $w={172}>Staircase</SheetTab>
          <SheetTab $w={126}>Faults</SheetTab>
          <SheetTab $w={240}>Replac. Matrix</SheetTab>
          <ClippedTab>Lic</ClippedTab>
          <MoreDots>...</MoreDots>
          <AddSheet>+</AddSheet>
          <TabDots />
          <HScroll>
            <HButton $w={32}><Icon width="7" height="20" viewBox="0 0 7 20"><path d="M7 0v20L0 10z" fill="#666" /></Icon></HButton>
            <HThumb />
            <HTrack />
            <HButton $w={33}><Icon width="7" height="20" viewBox="0 0 7 20"><path d="M0 0v20l7-10z" fill="#666" /></Icon></HButton>
          </HScroll>
        </TabBar>

        <StatusBar>
          Prêt
          <Icon $ml={44} width="22" height="30" viewBox="0 0 22 30">
            <path d="M1 1h14l6 6v22H1z" fill="#fff" stroke="#555" strokeWidth="1.800" />
            <path d="M5 13l12 10M5 22l12-9M11 10v14" stroke="#555" strokeWidth="1.800" />
          </Icon>
          <StatusText $ml={10}>For Business Use Only</StatusText>
          <ViewButton $active $ml={2002}>
            <Icon width="27" height="28" viewBox="0 0 27 28"><path d="M1 1h25v26H1zM1 9.500h25M1 18h25M9.500 1v26M17.500 1v26" fill="none" stroke="#444" strokeWidth="2" /></Icon>
          </ViewButton>
          <ViewButton>
            <Icon width="29" height="28" viewBox="0 0 29 28"><path d="M1 1h27v26H1zM8 5h13v18H8zM11 10h7M11 14h7M11 18h7" fill="none" stroke="#444" strokeWidth="2" /></Icon>
          </ViewButton>
          <ViewButton>
            <Icon width="30" height="28" viewBox="0 0 30 28"><path d="M1 1h28v26H1zM1 16h14V1M22 1v11" fill="none" stroke="#444" strokeWidth="2" /></Icon>
          </ViewButton>
          <Icon $ml={12} width="15" height="3" viewBox="0 0 15 3"><path d="M0 1.500h15" stroke="#555" strokeWidth="3" /></Icon>
          <ZoomSlider><ZoomThumb /></ZoomSlider>
          <Icon $ml={12} width="18" height="18" viewBox="0 0 18 18"><path d="M0 9h18M9 0v18" stroke="#555" strokeWidth="2" /></Icon>
          <StatusText $ml={28}>100 %</StatusText>
        </StatusBar>
      </Window>
      <Footer>
        Download the « <b>ecoinvent 3.9_cutoff_ecoSpold02</b> <Spaced $ls={-0.5}>» database for the example</Spaced><br />
        <Spaced $ls={0.35}>on https://ecoinvent.org/</Spaced>
      </Footer>
      <Arrows width="3247" height="2185" viewBox="0 0 3247 2185">
        <line x1="1605" y1="235" x2="1368" y2="772" {...shaft} />
        <line x1="1605" y1="235" x2="1532" y2="1036" {...shaft} />
        <line x1="1605" y1="235" x2="1605" y2="1305" {...shaft} />
        <line x1="1605" y1="235" x2="1361" y2="1388" {...shaft} />
        <polygon points="1352,812 1350,762 1388,783" fill="#000" />
        <polygon points="1530,1077 1512,1034 1553,1038" fill="#000" />
        <polygon points="1605,1347 1584,1305 1625,1305" fill="#000" />
        <polygon points="1353,1428 1340,1384 1382,1392" fill="#000" />
      </Arrows>
    </Page>
  );
}
